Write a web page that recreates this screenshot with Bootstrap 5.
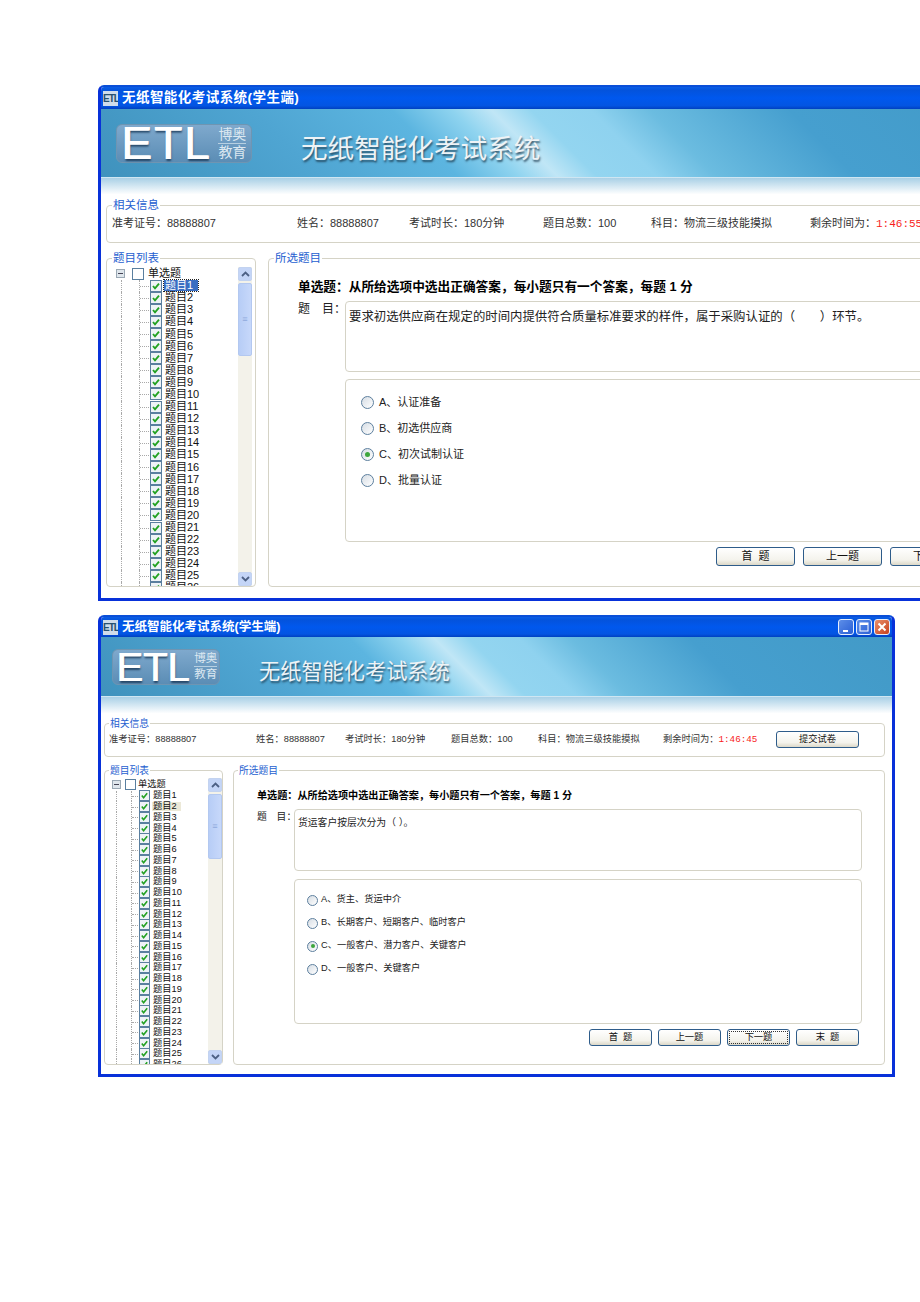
<!DOCTYPE html>
<html lang="zh">
<head>
    <meta charset="UTF-8">
    <title>无纸智能化考试系统</title>
    <link href="https://cdn.jsdelivr.net/npm/bootstrap@5.3.3/dist/css/bootstrap.min.css" rel="stylesheet">
    <style>
        html, body { background: #fff; height: 1302px; overflow: hidden; }
        body { padding: 85px 0 0 98px; font-family: "Liberation Sans", "Noto Sans CJK SC", sans-serif; color: #222; }
        /* 第一个窗口在右边被截断 */
        #windows { width: 822px; overflow: hidden; }

        /* 两个窗口共用一套结构，尺寸放在变量里 */
        .xp-win {
            border: solid #0831d9; border-width: 2px 3px 3px 3px; border-top-color: #0a4fd8;
            border-radius: 6px 6px 0 0; background: #fff; overflow: hidden; font-size: var(--fs);
        }
        .win-big { width: 932px; height: 516px; margin-bottom: 14px; --fs: 11px; --title-fs: 13.5px; --title-h: 22px; --banner-h: 69px; --fade-h: 22px; }
        .win-small { width: 797px; height: 462px; --fs: 9.25px; --title-fs: 12.5px; --title-h: 20px; --banner-h: 60px; --fade-h: 22px; }

        .xp-title {
            height: var(--title-h); padding: 0 2px;
            background: linear-gradient(#0a5ee6 0, #0453dc 15%, #0058ee 50%, #0355e2 85%, #0040c0 100%);
            color: #fff; font-weight: 700; font-size: var(--title-fs); white-space: nowrap;
        }
        .win-big .xp-title { letter-spacing: .45px; }
        .win-btn {
            width: 16px; height: 16px; border: 1px solid #e6eefc; border-radius: 3px; margin-left: 2px;
            background: linear-gradient(135deg, #5d8ee8, #2a5fd5);
        }
        .win-btn.is-close { background: linear-gradient(135deg, #e8906c, #c8401c); }
        .title-icon { width: 15px; height: 15px; background: #cfdcea; color: #27506f; font-size: 10px; line-height: 15px; font-weight: 700; text-align: center; letter-spacing: -1px; overflow: hidden; }

        .xp-banner {
            height: var(--banner-h); gap: 49px; padding-left: 15px; border-bottom: 1px solid #cfe6f2;
            background: linear-gradient(45deg, #3f92bd 0, #4fa5d2 22%, #5cb5e0 36%, #8ed3ef 42%, #c0e6f6 46%, #93d5f0 50%, #8fd2ef 56%, #6bbce0 62%, #469fcf 76%, #429ac7 100%);
        }
        .win-small .xp-banner { gap: 39px; padding-left: 11px; }
        .etl-logo {
            width: 136px; height: 39px; padding: 0 5px 0 4px; gap: 7px; border: 1px solid #6f95b2; border-radius: 6px; flex: none;
            background: linear-gradient(#7fa9cd, #5b8db5); color: #fff;
        }
        .win-small .etl-logo { width: 108px; height: 36px; padding: 0 3px; gap: 5px; }
        .etl-word { font: 400 46px/39px "Liberation Sans", sans-serif; letter-spacing: 2px; text-shadow: 1px 0 0 #fff, 1px 2px 2px rgba(20,50,80,.8); }
        .win-small .etl-word { font-size: 40px; line-height: 36px; letter-spacing: 0; }
        .etl-sub { font-size: 14px; line-height: 17px; color: #dce8f1; text-align: center; white-space: nowrap; flex: none; }
        .win-small .etl-sub { font-size: 11.5px; line-height: 15px; }
        .etl-sub > div:first-child { border-bottom: 1px solid #b7d0e2; }
        .banner-name { margin-top: 14px; color: #eef3f6; font-size: 26.6px; font-weight: 400; white-space: nowrap; text-shadow: 1px 2px 2px rgba(30,60,80,.8); }
        .win-small .banner-name { margin-top: 10px; font-size: 21.2px; }
        .xp-fade { height: var(--fade-h); background: linear-gradient(#a9d0e6, #fff 75%); }

        fieldset.grp { border: 1px solid #d5d3c6; border-radius: 4px; padding: 0; min-width: 0; }
        fieldset.grp > legend {
            float: none; width: auto; margin: 0 0 0 5px; padding: 0 1px; line-height: 1;
            font-size: calc(var(--fs) + .5px); color: #2560d0;
        }
        .win-small fieldset.grp > legend { margin-left: 4px; }
        .win-big .win-body { padding: 0 5px; }
        .win-small .win-body { padding: 0 3px; }

        .info-grp { height: 43px; margin-bottom: 10px; }
        .win-small .info-grp { height: 38px; margin: 0 4px 9px 0; }
        .info-row { height: 24px; padding-left: 5px; color: #333; white-space: nowrap; }
        .win-small .info-row { height: 22px; padding-left: 4px; }
        .info-row > span { flex: none; }
        .w1 { width: 185px; } .w2 { width: 112px; } .w3 { width: 134px; } .w4 { width: 108px; } .w5 { width: 159px; }
        .win-small .w1 { width: 147px; } .win-small .w2 { width: 89px; } .win-small .w3 { width: 106px; } .win-small .w4 { width: 87px; } .win-small .w5 { width: 125px; } .win-small .w6 { width: 113px; }
        .time-left { color: #f81c1c; font-family: "Liberation Mono", monospace; }

        .main-row { gap: 12px; }
        .win-small .main-row { gap: 10px; margin-right: 4px; }
        .list-grp { width: 150px; height: 334px; flex: none; }
        .win-small .list-grp { width: 119px; height: 299px; }
        .tree-wrap { height: 321px; padding: 2px 3px 0 0; }
        .win-small .tree-wrap { height: 288px; padding: 2px 0 0 0; }
        .tree { flex: 1; min-width: 0; overflow: hidden; padding: 1px 0 0 9px; height: 100%; }
        .win-small .tree { padding-left: 7px; }
        .tree-row { height: 12.1px; display: flex; align-items: center; white-space: nowrap; color: #111; }
        .win-small .tree-row { height: 10.75px; }
        .win-small .tree-row:first-child { margin-bottom: 1px; }
        .expander { width: 9px; height: 9px; border: 1px solid #9aa8b4; background: #dfe6ec; flex: none; margin-right: 7px; position: relative; }
        .win-small .expander { margin-right: 4px; }
        .expander::after { content: ""; position: absolute; left: 1px; right: 1px; top: 3px; height: 1px; background: #445; }
        .tree-line { width: 18px; margin-left: 5px; flex: none; height: 100%; border-left: 1px dotted #a9a9a9; }
        .tree-line2 { width: 11px; flex: none; height: 100%; border-left: 1px dotted #a9a9a9; position: relative; }
        .win-small .tree-line { width: 15px; margin-left: 4px; }
        .win-small .tree-line2 { width: 8px; }
        .tree-line2::after { content: ""; position: absolute; left: 0; right: 1px; top: 50%; border-top: 1px dotted #a9a9a9; }
        .tick-box { width: 12px; height: 12px; flex: none; margin-right: 2px; border: 1px solid #5a7f9f; background: #eef3f7; display: flex; }
        .win-small .tick-box { width: 11px; height: 11px; }
        .tick-box.is-empty { background: #fff; margin-right: 3px; }
        .win-small .tick-box.is-empty { margin-right: 1px; }
        .tree-label { padding: 0 1px; line-height: 1; }
        .tree-label.is-current { background: #3a6ec2; color: #fff; outline: 1px dotted #222; padding-right: 5px; position: relative; z-index: 1; }
        .tree-label.is-hover { background: #ece9d8; padding-right: 4px; }
        .scroll-bar { width: 14px; flex: none; height: 100%; background: #f3f2ea; }
        .scroll-btn { height: 14px; flex: none; border: 1px solid #c3d3f0; border-radius: 2px; background: #c4d5f7; display: flex; align-items: center; justify-content: center; }
        .scroll-thumb { height: 73px; margin-top: 2px; background: linear-gradient(90deg, #b7cdf6, #c7d8fa); border: 1px solid #b3c8f0; border-radius: 2px; color: #8fa9dc; display: flex; align-items: center; justify-content: center; font-size: 9px; line-height: 1; }
        .win-small .scroll-thumb { height: 65px; }

        .ques-grp { flex: 1; min-width: 0; height: 334px; }
        .win-small .ques-grp { height: 299px; }
        .ques-pad { padding: 15px 15px 0 29px; }
        .win-small .ques-pad { padding: 13px 22px 0 23px; }
        .ques-head { font-size: 12.7px; font-weight: 700; color: #000; margin-bottom: 7px; white-space: nowrap; line-height: 14px; }
        .win-small .ques-head { font-size: 10.15px; margin-bottom: 6px; }
        .stem-label { width: 47px; flex: none; padding-top: 1px; font-size: 12px; line-height: 14px; white-space: nowrap; }
        .win-small .stem-label { width: 37px; font-size: 9.8px; }
        .stem-box { flex: 1; height: 71px; padding: 8px 3px 0; border: 1px solid #d5d3c6; border-radius: 4px; font-size: 12.4px; line-height: 14px; white-space: nowrap; overflow: hidden; }
        .win-small .stem-box { height: 62px; padding: 6px 3px 0; font-size: 9.8px; }
        .opts-box { height: 163px; margin: 7px 0 5px 47px; border: 1px solid #d5d3c6; border-radius: 4px; padding: 10px 0 0 15px; }
        .win-small .opts-box { height: 145px; margin: 8px 0 5px 37px; padding: 9px 0 0 12px; }
        .opt-row { height: 26px; display: flex; align-items: center; gap: 5px; }
        .win-small .opt-row { height: 23px; gap: 3px; }
        .radio-dot { width: 13px; height: 13px; border: 1px solid #5d7f9e; border-radius: 50%; background: linear-gradient(135deg, #d6dde4, #fff); flex: none; position: relative; }
        .win-small .radio-dot { width: 11px; height: 11px; }
        .radio-dot.is-on::after { content: ""; position: absolute; inset: 3px; border-radius: 50%; background: #3da63d; }
        .win-small .radio-dot.is-on::after { inset: 2.5px; }
        .xp-btn {
            height: 19px; border: 1px solid #2e5c8a; border-radius: 3px; padding: 0; font-size: inherit; line-height: 1; color: #111;
            background: linear-gradient(#fff, #f4f3ec 70%, #dcd8c8); flex: none;
        }
        .btn-row { gap: 8px; }
        .btn-row .xp-btn { width: 79px; }
        .win-big .btn-row { margin-left: 418px; }
        .win-small .btn-row { gap: 6px; justify-content: flex-end; margin-right: 3px; }
        .win-small .btn-row .xp-btn { width: 63px; height: 17px; }
        .submit-btn { width: 83px; height: 17px; }
        .is-focus { outline: 1px dotted #333; outline-offset: -3px; }
    </style>
</head>
<body>

    <div id="windows"></div>

    <script src="https://cdn.jsdelivr.net/npm/bootstrap@5.3.3/dist/js/bootstrap.bundle.min.js"></script>
    <script>
        // 两个窗口的内容
        const windows = [
            {
                cls: 'win-big', controls: false, current: 'is-current', focus: -1,
                time: '1:46:55',
                stem: '要求初选供应商在规定的时间内提供符合质量标准要求的样件，属于采购认证的（　　）环节。',
                options: ['A、认证准备', 'B、初选供应商', 'C、初次试制认证', 'D、批量认证']
            },
            {
                cls: 'win-small', controls: true, current: 'is-hover', focus: 2,
                time: '1:46:45',
                stem: '货运客户按层次分为（ ）。',
                options: ['A、货主、货运中介', 'B、长期客户、短期客户、临时客户', 'C、一般客户、潜力客户、关键客户', 'D、一般客户、关键客户']
            }
        ];
        const tick = '<svg viewBox="0 0 10 10" width="100%" height="100%"><path d="M2 5l2 2.4L8 2.6" fill="none" stroke="#21a121" stroke-width="1.8"/></svg>';
        const chevUp = '<svg width="9" height="6" viewBox="0 0 9 6"><path d="M1 5l3.5-3.5L8 5" fill="none" stroke="#4d6185" stroke-width="1.8"/></svg>';
        const chevDown = '<svg width="9" height="6" viewBox="0 0 9 6"><path d="M1 1l3.5 3.5L8 1" fill="none" stroke="#4d6185" stroke-width="1.8"/></svg>';

        function treeRows(win) {
            let rows = `<div class="tree-row"><span class="expander"></span><span class="tick-box is-empty"></span><span class="tree-label">单选题</span></div>`;
            for (let i = 1; i <= 26; i++) {
                const mark = (i === 1 && win.current === 'is-current') || (i === 2 && win.current === 'is-hover') ? win.current : '';
                rows += `<div class="tree-row"><span class="tree-line"></span><span class="tree-line2"></span><span class="tick-box">${tick}</span><span class="tree-label ${mark}">题目${i}</span></div>`;
            }
            return rows;
        }

        function renderWindow(win) {
            const buttons = win.controls ? `
                <div class="ms-auto d-flex">
                    <span class="win-btn d-flex align-items-end justify-content-center"><svg width="8" height="5"><rect x="1" y="1" width="5" height="2" fill="#fff"/></svg></span>
                    <span class="win-btn d-flex align-items-center justify-content-center"><svg width="10" height="10"><rect x="1" y="1" width="8" height="8" fill="none" stroke="#fff" stroke-width="1"/><rect x="1" y="1" width="8" height="2" fill="#fff"/></svg></span>
                    <span class="win-btn is-close d-flex align-items-center justify-content-center"><svg width="10" height="10"><path d="M1.5 1.5l7 7M8.5 1.5l-7 7" stroke="#fff" stroke-width="2"/></svg></span>
                </div>` : '';
            const submit = win.controls ? '<button class="xp-btn submit-btn">提交试卷</button>' : '';
            const opts = win.options.map((o, i) => `<div class="opt-row"><span class="radio-dot ${i === 2 ? 'is-on' : ''}"></span><span>${o}</span></div>`).join('');
            const navBtns = ['首&nbsp;&nbsp;题', '上一题', '下一题', '末&nbsp;&nbsp;题'].map((t, i) => `<button class="xp-btn ${i === win.focus ? 'is-focus' : ''}">${t}</button>`).join('');
            return `
            <div class="xp-win ${win.cls}">
                <div class="xp-title d-flex align-items-center gap-1">
                    <span class="title-icon">ETL</span><span>无纸智能化考试系统(学生端)</span>${buttons}
                </div>
                <div class="xp-banner d-flex align-items-center">
                    <div class="etl-logo d-flex align-items-center">
                        <span class="etl-word">ETL</span>
                        <div class="etl-sub"><div>博奥</div><div>教育</div></div>
                    </div>
                    <div class="banner-name">无纸智能化考试系统</div>
                </div>
                <div class="xp-fade"></div>
                <div class="win-body">
                    <fieldset class="grp info-grp">
                        <legend>相关信息</legend>
                        <div class="info-row d-flex align-items-center">
                            <span class="w1">准考证号：88888807</span>
                            <span class="w2">姓名：88888807</span>
                            <span class="w3">考试时长：180分钟</span>
                            <span class="w4">题目总数：100</span>
                            <span class="w5">科目：物流三级技能摸拟</span>
                            <span class="w6">剩余时间为：<span class="time-left">${win.time}</span></span>
                            ${submit}
                        </div>
                    </fieldset>
                    <div class="main-row d-flex">
                        <fieldset class="grp list-grp">
                            <legend>题目列表</legend>
                            <div class="tree-wrap d-flex">
                                <div class="tree">${treeRows(win)}</div>
                                <div class="scroll-bar d-flex flex-column">
                                    <div class="scroll-btn">${chevUp}</div>
                                    <div class="scroll-thumb">≡</div>
                                    <div class="flex-grow-1"></div>
                                    <div class="scroll-btn">${chevDown}</div>
                                </div>
                            </div>
                        </fieldset>
                        <fieldset class="grp ques-grp">
                            <legend>所选题目</legend>
                            <div class="ques-pad">
                                <div class="ques-head">单选题：从所给选项中选出正确答案，每小题只有一个答案，每题 1 分</div>
                                <div class="d-flex">
                                    <div class="stem-label">题　目：</div>
                                    <div class="stem-box">${win.stem}</div>
                                </div>
                                <div class="opts-box">${opts}</div>
                                <div class="btn-row d-flex">${navBtns}</div>
                            </div>
                        </fieldset>
                    </div>
                </div>
            </div>`;
        }

        document.getElementById('windows').innerHTML = windows.map(renderWindow).join('');
    </script>
</body>
</html>
